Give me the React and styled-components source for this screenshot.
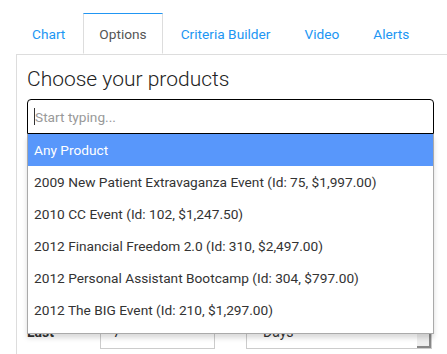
import React from "react";
import styled, { createGlobalStyle } from "styled-components";

const GlobalStyle = createGlobalStyle`
  body {
    margin: 0;
    background: #ffffff;
    font-family: Roboto, "Liberation Sans", sans-serif;
    color: #333;
  }
`;

const Page = styled.div`
  padding: 13px 0 0 16px;
  height: 341px;
  overflow: hidden;
`;

const TabBar = styled.ul`
  display: flex;
  margin: 0;
  padding: 0;
  list-style: none;
  border-bottom: 1px solid #ddd;
  height: 41px;
`;

const Tab = styled.li`
  display: flex;
  align-items: center;
  padding: 1px 15px 0;
  margin: 0 2px -1px 0;
  height: 41px;
  box-sizing: border-box;
  font-size: 13.7px;
  color: ${(p) => (p.active ? "#555" : "#2196f3")};
  background: #fff;
  border: 1px solid ${(p) => (p.active ? "#ddd" : "transparent")};
  border-top-color: ${(p) => (p.active ? "#2196f3" : "transparent")};
  border-bottom-color: ${(p) => (p.active ? "#fff" : "transparent")};
`;

const Panel = styled.div`
  border-left: 1px solid #ddd;
  padding: 11px 0 0 10px;
  height: 300px;
`;

const Heading = styled.h2`
  margin: 0 0 7px;
  font-size: 21px;
  line-height: 26px;
  font-weight: 300;
  color: #222;
`;

const Picker = styled.div`
  position: relative;
  width: 407px;
`;

const SearchInput = styled.input`
  display: block;
  width: 100%;
  box-sizing: border-box;
  height: 35px;
  padding: 0 7px;
  border: 1px solid #000;
  border-radius: 4px 4px 0 0;
  font-family: Roboto, "Liberation Sans", sans-serif;
  font-size: 13.7px;
  color: #333;
  outline: none;
  &::placeholder {
    color: #999;
  }
`;

const Caret = styled.span`
  position: absolute;
  left: 7px;
  top: 9px;
  width: 1px;
  height: 17px;
  background: #333;
`;

const Options = styled.ul`
  position: absolute;
  left: 0;
  right: 0;
  top: 35px;
  margin: 0;
  padding: 0 0 7px;
  list-style: none;
  background: #fff;
  border: 1px solid #aaa;
  border-top: none;
  box-shadow: 0 4px 5px rgba(0, 0, 0, 0.15);
  z-index: 2;
`;

const Option = styled.li`
  height: 32px;
  line-height: 32px;
  padding: 0 6px;
  font-size: 13.7px;
  white-space: nowrap;
  color: ${(p) => (p.highlighted ? "#fff" : "#333")};
  background: ${(p) => (p.highlighted ? "#5897fb" : "transparent")};
`;

const FormRow = styled.div`
  display: flex;
  align-items: center;
  margin-top: 181px;
  height: 34px;
`;

const Label = styled.label`
  width: 73px;
  font-size: 14px;
  font-weight: 700;
`;

const NumberBox = styled.div`
  width: 115px;
  height: 34px;
  box-sizing: border-box;
  border: 1px solid #ccc;
  padding: 0 12px;
  line-height: 32px;
  font-size: 14px;
  margin-right: 31px;
`;

const SelectBox = styled.div`
  position: relative;
  width: 186px;
  height: 34px;
  box-sizing: border-box;
  border: 1px solid #ccc;
  padding: 0 16px;
  line-height: 32px;
  font-size: 14px;
  &::after {
    content: "";
    position: absolute;
    right: 0;
    bottom: 0;
    width: 12px;
    height: 12px;
    background: #eee;
    border-right: 2px solid #888;
    border-bottom: 2px solid #888;
  }
`;

const tabs = ["Chart", "Options", "Criteria Builder", "Video", "Alerts"];

const products = [
  "Any Product",
  "2009 New Patient Extravaganza Event (Id: 75, $1,997.00)",
  "2010 CC Event (Id: 102, $1,247.50)",
  "2012 Financial Freedom 2.0 (Id: 310, $2,497.00)",
  "2012 Personal Assistant Bootcamp (Id: 304, $797.00)",
  "2012 The BIG Event (Id: 210, $1,297.00)",
];

export default function App() {
  return (
    <Page>
      <GlobalStyle />
      <TabBar>
        {tabs.map((t) => (
          <Tab key={t} active={t === "Options"}>
            {t}
          </Tab>
        ))}
      </TabBar>
      <Panel>
        <Heading>Choose your products</Heading>
        <Picker>
          <SearchInput placeholder="Start typing..." readOnly />
          <Caret />
          <Options>
            {products.map((p, i) => (
              <Option key={p} highlighted={i === 0}>
                {p}
              </Option>
            ))}
          </Options>
        </Picker>
        <FormRow>
          <Label>Last</Label>
          <NumberBox>7</NumberBox>
          <SelectBox>Days</SelectBox>
        </FormRow>
      </Panel>
    </Page>
  );
}
